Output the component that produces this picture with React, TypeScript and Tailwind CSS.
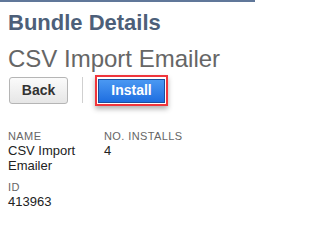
export default function App() {
    return (
        <div className="h-[212px] w-[255px] overflow-hidden border-t-2 border-[#607799] bg-white font-['Liberation_Sans',Arial,sans-serif]">
            <div className="px-2 pt-[8px]">
                <h1 className="text-[22px] font-bold leading-[25px] text-[#4d5f79]">
                    Bundle Details
                </h1>
                <h2 className="mt-[10px] text-[24px] leading-[28px] text-[#666666]">
                    CSV Import Emailer
                </h2>

                <div className="mt-[2px] flex items-center">
                    <button className="ml-px h-[27px] w-[59px] rounded-[3px] border border-[#b5b5b5] bg-gradient-to-b from-[#fbfbfb] to-[#e6e6e6] text-[14px] font-bold text-[#333333]">
                        Back
                    </button>
                    <div className="ml-[14px] mr-[12px] h-[26px] w-px bg-[#d0d0d0]" />
                    <div className="border-2 border-[#f0353c] p-px shadow-[0_3px_5px_rgba(0,0,0,0.3)]">
                        <button className="h-[24px] w-[67px] border border-[#1c4e9c] bg-gradient-to-b from-[#4a98f2] to-[#1e6ee0] text-[14px] font-bold text-white">
                            Install
                        </button>
                    </div>
                </div>

                <div className="mt-[24px] grid grid-cols-[96px_1fr] gap-y-2">
                    <div>
                        <p className="text-[11px] leading-[13px] tracking-[0.4px] text-[#666666]">
                            NAME
                        </p>
                        <p className="w-[80px] text-[13px] leading-[15px] text-[#222222]">
                            CSV Import Emailer
                        </p>
                    </div>
                    <div>
                        <p className="text-[11px] leading-[13px] tracking-[0.4px] text-[#666666]">
                            NO. INSTALLS
                        </p>
                        <p className="text-[13px] leading-[15px] text-[#222222]">4</p>
                    </div>
                    <div>
                        <p className="text-[11px] leading-[13px] tracking-[0.4px] text-[#666666]">
                            ID
                        </p>
                        <p className="text-[13px] leading-[15px] text-[#222222]">413963</p>
                    </div>
                </div>
            </div>
        </div>
    );
}
